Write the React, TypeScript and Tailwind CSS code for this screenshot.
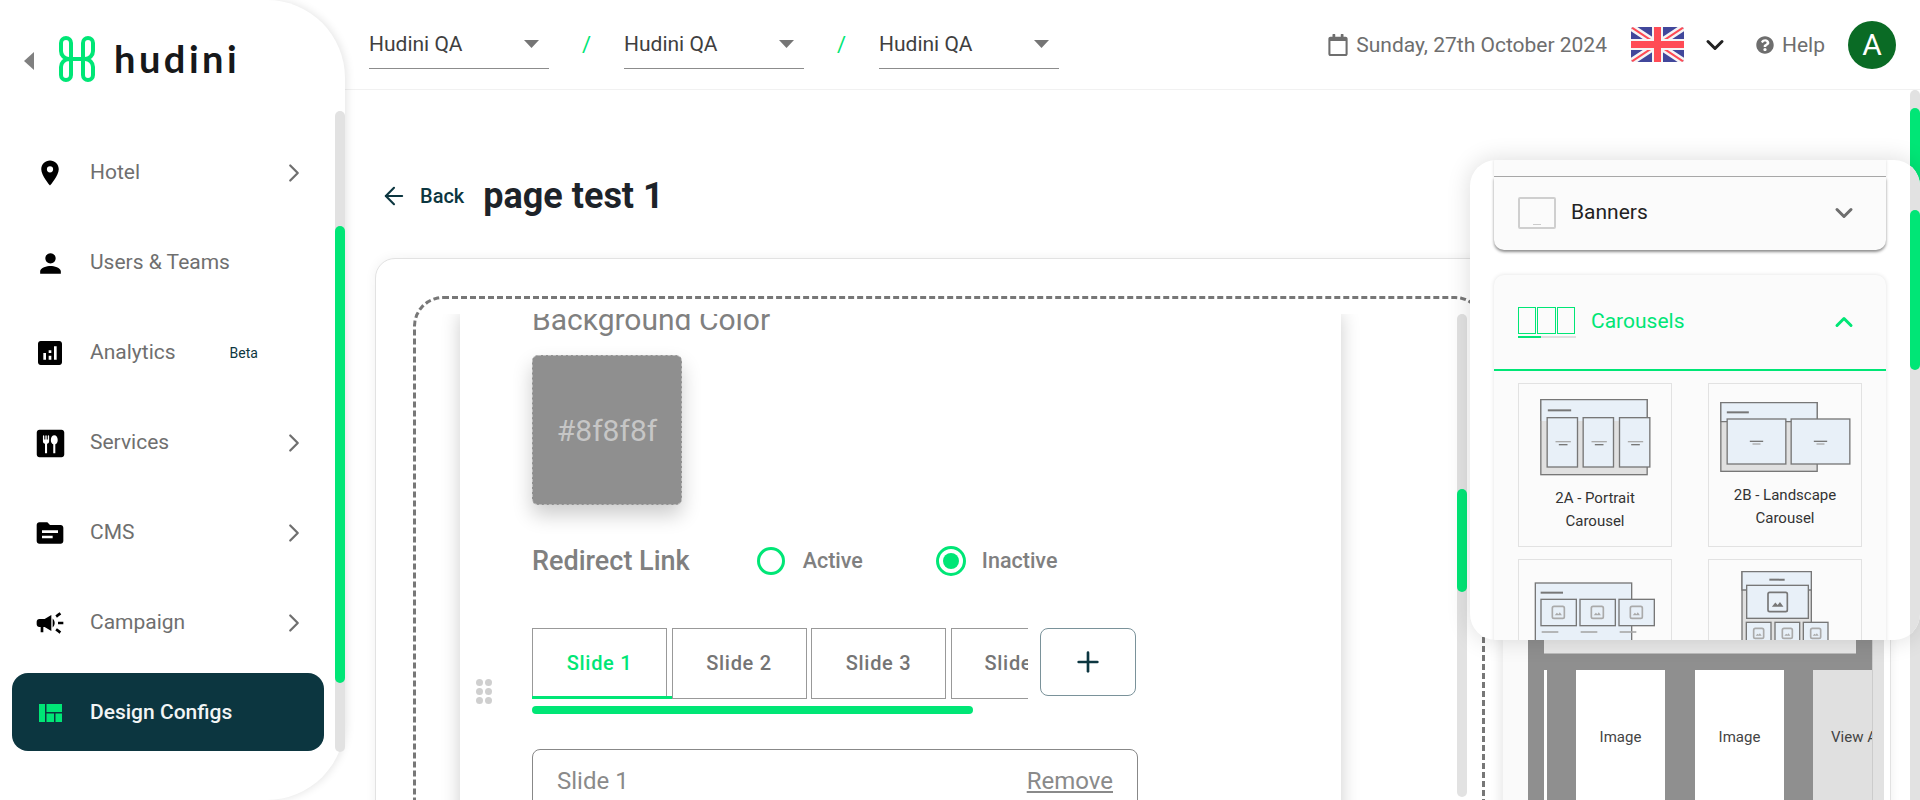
import { ArrowLeft, ChevronDown, ChevronRight, ChevronUp, Plus } from "lucide-react";
import { FaQuestionCircle, FaRegCalendar } from "react-icons/fa";
import {
  MdAnalytics,
  MdCampaign,
  MdDining,
  MdLocationOn,
  MdPerson,
  MdTopic,
} from "react-icons/md";

const navItems = [
  { icon: <MdLocationOn size={30} />, label: "Hotel", arrow: true },
  { icon: <MdPerson size={31} />, label: "Users & Teams" },
  { icon: <MdAnalytics size={32} />, label: "Analytics", beta: true },
  { icon: <MdDining size={33} />, label: "Services", arrow: true },
  { icon: <MdTopic size={32} />, label: "CMS", arrow: true },
  { icon: <MdCampaign size={32} />, label: "Campaign", arrow: true },
];

function Logo() {
  return (
    <svg width="38" height="46" viewBox="0 0 38 46" fill="none" stroke="#00e676" strokeWidth="4">
      <path d="M13 23H11a8 8 0 0 1-8-8V7a5 5 0 0 1 10 0V39a5 5 0 0 1-10 0V31a8 8 0 0 1 8-8" />
      <path d="M25 23h2a8 8 0 0 0 8-8V7a5 5 0 0 0-10 0V39a5 5 0 0 0 10 0V31a8 8 0 0 0-8-8" />
      <path d="M13 23h12" />
    </svg>
  );
}

function Sidebar() {
  return (
    <aside className="w-[345px] h-[800px] shrink-0 bg-white rounded-r-[78px] shadow-[2px_0_8px_rgba(0,0,0,0.1)] z-10 flex flex-col">
      <div className="h-[111px] shrink-0 flex items-start pt-[36px] pl-[24px]">
        <svg width="10" height="18" viewBox="0 0 10 18" className="mt-[16px] mr-[24px]">
          <polygon points="10,0 10,18 0,9" fill="#808080" />
        </svg>
        <Logo />
        <span className="ml-[18px] mt-[-1px] text-[38px] leading-[46px] font-bold tracking-[3.5px] text-[#16181a] font-['Lato',sans-serif]">
          hudini
        </span>
      </div>
      <div className="flex flex-1">
        <nav className="w-[335px] pt-[22px] pl-[12px] flex flex-col gap-[12px]">
          {navItems.map((item) => (
            <div key={item.label} className="w-[312px] h-[78px] shrink-0 flex items-center pt-[2px] pl-[20px] pr-[15px]">
              <span className="w-[36px] flex justify-center text-black">{item.icon}</span>
              <span className="ml-[22px] text-[21px] text-[#6f6f6f]">{item.label}</span>
              {item.beta && <span className="ml-[54px] text-[14px] text-[#0c3640]">Beta</span>}
              {item.arrow && <ChevronRight size={30} strokeWidth={1.8} className="ml-auto text-[#6f6f6f]" />}
            </div>
          ))}
          <div className="w-[312px] h-[78px] shrink-0 flex items-center pt-[2px] pl-[27px] rounded-[16px] bg-[#0c3640]">
            <svg width="23" height="18" viewBox="0 0 23 18" fill="#00e676">
              <rect x="0" y="0" width="6" height="18" />
              <rect x="7.500" y="0" width="15.500" height="8" />
              <rect x="7.500" y="9.500" width="7.500" height="8.500" />
              <rect x="16.500" y="9.500" width="6.500" height="8.500" />
            </svg>
            <span className="ml-[28px] text-[21px] font-medium text-[#f2f5f5]">Design Configs</span>
          </div>
        </nav>
        <div className="w-[10px] h-[641px] rounded-full bg-[#e2e2e2]">
          <div className="mt-[115px] h-[457px] rounded-full bg-[#00e676]" />
        </div>
      </div>
    </aside>
  );
}

function HierarchySelect() {
  return (
    <div className="w-[180px] h-[48px] flex items-center justify-between pr-[10px] border-b-[1.5px] border-[#8c8c8c]">
      <span className="pt-[2px] text-[21px] text-[#3f3f3f]">Hudini QA</span>
      <svg width="15" height="8" viewBox="0 0 15 8">
        <polygon points="0,0 15,0 7.500,8" fill="#757575" />
      </svg>
    </div>
  );
}

function Header() {
  return (
    <header className="h-[90px] shrink-0 flex items-center pl-[24px] pr-[24px] border-b border-[#f1f1f1]">
      <HierarchySelect />
      <span className="w-[75px] text-center text-[22px] text-[#00e676]">/</span>
      <HierarchySelect />
      <span className="w-[75px] text-center text-[22px] text-[#00e676]">/</span>
      <HierarchySelect />
      <div className="ml-auto flex items-center text-[#6e6e6e]">
        <FaRegCalendar size={22} />
        <span className="ml-[7px] pt-[2px] text-[21px]">Sunday, 27th October 2024</span>
        <svg width="53" height="35" viewBox="0 0 53 35" className="ml-[24px] rounded-[3px]">
          <rect width="53" height="35" fill="#41479b" />
          <path d="M0 0 53 35M53 0 0 35" stroke="#f5f5f5" strokeWidth="7" />
          <path d="M0 0 53 35M53 0 0 35" stroke="#ff4b55" strokeWidth="2" />
          <path d="M26.500 0V35M0 17.500H53" stroke="#f5f5f5" strokeWidth="11" />
          <path d="M26.500 0V35M0 17.500H53" stroke="#ff4b55" strokeWidth="7" />
        </svg>
        <ChevronDown size={28} strokeWidth={2.6} className="ml-[17px] text-[#222]" />
        <FaQuestionCircle size={18} className="ml-[27px]" />
        <span className="ml-[8px] pt-[2px] text-[21px]">Help</span>
        <span className="ml-[23px] w-[48px] h-[48px] rounded-full bg-[#0a6b25] flex items-center justify-center text-[30px] text-white">
          A
        </span>
      </div>
    </header>
  );
}

function TabButton({ label, active, className }: { label: string; active?: boolean; className: string }) {
  return (
    <div
      className={`h-[71px] shrink-0 flex items-center pb-[2px] border border-[#999] text-[20px] font-medium tracking-[0.7px] ${className} ${
        active ? "text-[#00e676]" : "text-[#757575]"
      }`}
    >
      {label}
    </div>
  );
}

function Editor() {
  return (
    <div className="w-[881px] h-[520px] bg-white shadow-[0_0_18px_rgba(0,0,0,0.2)] pl-[72px] font-['Roboto',sans-serif]">
      <div className="-mt-[12px] text-[30px] leading-[36px] text-[#808080]">Background Color</div>
      <div className="mt-[17px] w-[150px] h-[150px] rounded-[6px] bg-[#8f8f8f] border border-dashed border-[#bdbdbd] shadow-[0_10px_20px_rgba(0,0,0,0.2)] flex items-center justify-center text-[30px] text-[#c6c6c6]">
        #8f8f8f
      </div>
      <div className="mt-[38px] h-[36px] flex items-center text-[#808080]">
        <span className="text-[27px] font-medium">Redirect Link</span>
        <span className="ml-[67px] w-[28px] h-[28px] rounded-full border-[3px] border-[#00e676]" />
        <span className="ml-[18px] text-[21.5px] font-medium">Active</span>
        <span className="ml-[73px] w-[30px] h-[30px] rounded-full border-[3px] border-[#00e676] flex items-center justify-center">
          <span className="w-[16px] h-[16px] rounded-full bg-[#00e676]" />
        </span>
        <span className="ml-[16px] text-[21.5px] font-medium">Inactive</span>
      </div>
      <div className="mt-[49px] -ml-[56px] flex items-center">
        <div className="w-[16px] h-[25px] grid grid-cols-2 gap-[2px] mt-[40px]">
          {[1, 2, 3, 4, 5, 6].map((d) => (
            <span key={d} className="w-[7px] h-[7px] rounded-full bg-[#cfcfcf]" />
          ))}
        </div>
        <div className="ml-[40px] w-[496px]">
          <div className="relative flex gap-[4.5px] overflow-hidden">
            <TabButton label="Slide 1" active className="w-[135px] justify-center" />
            <TabButton label="Slide 2" className="w-[135px] justify-center" />
            <TabButton label="Slide 3" className="w-[135px] justify-center" />
            <TabButton label="Slide 4" className="w-[135px] pl-[33px]" />
            <span className="absolute left-0 bottom-0 w-[140px] h-[3px] bg-[#00e676]" />
          </div>
          <div className="mt-[7px] w-[441px] h-[8px] rounded-full bg-[#00e676]" />
        </div>
        <div className="ml-[12px] mb-[18px] w-[96px] h-[68px] rounded-[8px] border border-[#7a929a] flex items-center justify-center text-[#0c3640]">
          <Plus size={32} strokeWidth={2} />
        </div>
      </div>
      <div className="mt-[35px] w-[606px] h-[80px] rounded-[8px] border border-[#888] flex items-start justify-between pt-[13px] px-[24px] text-[24px] text-[#8a8a8a]">
        <span>Slide 1</span>
        <span className="underline">Remove</span>
      </div>
    </div>
  );
}

function PreviewStrip() {
  return (
    <div className="w-[381px] shrink-0 h-[520px] flex self-start mt-[-2px]">
      <div className="w-[25px] bg-[#fafafa] shadow-[-4px_0_10px_rgba(0,0,0,0.08)]" />
      <div className="w-[344px] bg-[#8f8f8f] flex flex-col pt-[302px] overflow-hidden">
        <div className="mx-[16px] h-[58px] shrink-0 bg-[#e8e8e8] border-b border-[#bbb]" />
        <div className="mt-[16px] ml-[16px] flex flex-1 text-[15px] text-[#444]">
          <div className="w-[3px] bg-white" />
          <div className="ml-[29px] w-[89px] bg-white flex justify-center pt-[56px]">Image</div>
          <div className="ml-[30px] w-[89px] bg-white flex justify-center pt-[56px]">Image</div>
          <div className="ml-[29px] w-[59px] bg-[#e0e0e0] pl-[18px] pt-[56px] whitespace-nowrap overflow-hidden">View All</div>
        </div>
      </div>
      <div className="w-[12px] bg-[#e2e2e2] border-l border-[#ccc]" />
    </div>
  );
}

function MainCard() {
  return (
    <section className="ml-[30px] mt-[52px] w-[1516px] h-[600px] rounded-t-[20px] border border-[#e2e2e2] shadow-[0_0_12px_rgba(0,0,0,0.06)] pt-[37px] pl-[37px] flex gap-[18px] bg-white">
      <div className="w-[1072px] h-[560px] shrink-0 rounded-[30px] border-[3px] border-dashed border-[#777] pt-[15px]">
        <div className="flex h-[486px] overflow-hidden pl-[44px]">
          <Editor />
          <div className="ml-[116px] w-[10px] h-[483px] rounded-full bg-[#e2e2e2]">
            <div className="mt-[175px] h-[103px] rounded-full bg-[#00e676]" />
          </div>
        </div>
      </div>
      <PreviewStrip />
    </section>
  );
}

function Thumb2A() {
  return (
    <svg width="117" height="80" viewBox="230 80 350 240" fill="#e8f0f8" stroke="#777" strokeWidth="4">
      <rect x="241" y="88" width="319" height="225" fill="#e0e0e0" />
      <path d="M241 152V88H560V152Z" stroke="none" />
      <path d="M241 152V88H560V140" fill="none" />
      <path d="M262 120h70" strokeWidth="6" />
      {[260, 368, 477].map((x) => (
        <g key={x}>
          <rect x={x} y="142" width="91" height="148" />
          <path d={`M${x + 25} 214h46`} stroke="#aaa" strokeWidth="4" />
          <path d={`M${x + 35} 223h26`} strokeWidth="4" />
        </g>
      ))}
    </svg>
  );
}

function Thumb2B() {
  return (
    <svg width="137" height="75" viewBox="770 90 410 225" fill="#e8f0f8" stroke="#777" strokeWidth="4">
      <rect x="781" y="98" width="289" height="206" fill="#e0e0e0" />
      <path d="M781 155V98H1070V155Z" />
      <path d="M799 127h66" strokeWidth="6" />
      {[800, 992].map((x) => (
        <g key={x}>
          <rect x={x} y="147" width="176" height="135" />
          <path d={`M${x + 68} 214h40`} strokeWidth="4" />
          <path d={`M${x + 76} 222h24`} stroke="#aaa" strokeWidth="4" />
        </g>
      ))}
    </svg>
  );
}

function ImageGlyph({ x, y, s, dark }: { x: number; y: number; s: number; dark?: boolean }) {
  const c = dark ? "#777" : "#aaa";
  return (
    <g>
      <rect x={x} y={y} width={s} height={s} rx="5" fill="#e8f0f8" stroke={c} strokeWidth="5" />
      <path d={`M${x + s * 0.2} ${y + s * 0.75}l${s * 0.18} -${s * 0.22}l${s * 0.12} ${s * 0.12}l${s * 0.12} -${s * 0.15}l${s * 0.18} ${s * 0.25}Z`} fill={c} stroke="none" />
    </g>
  );
}

function Thumb3() {
  return (
    <svg width="125" height="60" viewBox="220 635 375 180" fill="#e8f0f8" stroke="#777" strokeWidth="4" className="mt-[21px] ml-[14px]">
      <rect x="227" y="641" width="289" height="200" />
      <path d="M243 670h67" strokeWidth="6" />
      {[244, 361, 478].map((x) => (
        <g key={x}>
          <rect x={x} y="690" width="106" height="79" />
          <ImageGlyph x={x + 34} y={711} s={36} />
          <path d={`M${x + 2} 788h50`} stroke="#aaa" strokeWidth="5" />
        </g>
      ))}
    </svg>
  );
}

function Thumb4() {
  return (
    <svg width="90" height="75" viewBox="845 600 270 225" fill="#e8f0f8" stroke="#777" strokeWidth="4" className="mt-[10px] ml-[32px]">
      <rect x="848" y="605" width="208" height="220" fill="#e0e0e0" />
      <path d="M848 660V605H1056V660Z" />
      <path d="M930 629h46" strokeWidth="6" />
      <rect x="862" y="646" width="185" height="99" />
      <ImageGlyph x={926} y={667} s={58} dark />
      {[861, 947, 1032].map((x) => (
        <g key={x}>
          <rect x={x} y="757" width="74" height="70" />
          <ImageGlyph x={x + 22} y={775} s={30} />
        </g>
      ))}
    </svg>
  );
}

function WidgetPanel() {
  return (
    <div className="absolute left-[1470px] top-[160px] w-[450px] h-[480px] bg-white rounded-[26px] shadow-[0_0_24px_rgba(0,0,0,0.14)] flex overflow-hidden z-20 font-['Roboto',sans-serif]">
      <div className="w-[440px] px-[24px] overflow-hidden">
        <div className="h-[17px] bg-[#fbfbfb] border-b border-[#aaa] shadow-[0_0_3px_rgba(0,0,0,0.15)]" />
        <div className="h-[73px] flex items-center pb-[2px] pl-[24px] pr-[28px] bg-[#fbfbfb] rounded-b-[10px] shadow-[0_2px_3px_rgba(0,0,0,0.45)]">
          <div className="w-[38px] h-[32px] rounded-[2px] border-2 border-[#cfcfcf] flex items-end justify-center">
            <span className="w-[8px] h-[1px] mb-[2px] bg-[#ccc]" />
          </div>
          <span className="ml-[15px] text-[21px] text-[#222]">Banners</span>
          <ChevronDown size={28} strokeWidth={2.6} className="ml-auto text-[#6e6e6e]" />
        </div>
        <div className="mt-[25px] bg-[#fbfbfb] rounded-t-[10px] shadow-[0_0_4px_rgba(0,0,0,0.12)] h-[400px]">
          <div className="h-[96px] flex items-center pl-[24px] pr-[28px] border-b-2 border-[#00e676] text-[#00e676]">
            <div className="w-[58px]">
              <div className="flex gap-[1px]">
                <span className="w-[18px] h-[27px] border border-[#00e676]" />
                <span className="w-[19px] h-[27px] border border-[#00e676]" />
                <span className="w-[18px] h-[27px] border border-[#00e676]" />
              </div>
              <div className="mt-[2px] h-[2px] bg-[#e0e0e0]">
                <div className="w-[23px] h-[2px] bg-[#00e676]" />
              </div>
            </div>
            <span className="ml-[15px] text-[21px]">Carousels</span>
            <ChevronUp size={28} strokeWidth={2.6} className="ml-auto" />
          </div>
          <div className="pt-[12px] pl-[24px] grid grid-cols-[154px_154px] gap-x-[36px] gap-y-[12px] text-[15px] leading-[23px] text-[#333] text-center">
            <div className="h-[164px] border border-[#e2e2e2] flex flex-col items-center pt-[13px]">
              <Thumb2A />
              <div className="mt-[10px]">2A - Portrait<br />Carousel</div>
            </div>
            <div className="h-[164px] border border-[#e2e2e2] flex flex-col items-center pt-[16px]">
              <Thumb2B />
              <div className="mt-[9px]">2B - Landscape<br />Carousel</div>
            </div>
            <div className="h-[164px] border border-[#e2e2e2]"><Thumb3 /></div>
            <div className="h-[164px] border border-[#e2e2e2]"><Thumb4 /></div>
          </div>
        </div>
      </div>
      <div className="w-[10px] rounded-t-full bg-[#e2e2e2]">
        <div className="mt-[50px] h-[160px] rounded-full bg-[#00e676]" />
      </div>
    </div>
  );
}

export default function App() {
  return (
    <div className="relative w-[1920px] h-[800px] overflow-hidden bg-white flex font-['Roboto',sans-serif]">
      <Sidebar />
      <main className="flex-1 min-w-0 flex flex-col">
        <Header />
        <div className="flex flex-1 min-h-0">
          <div className="flex-1 min-w-0">
            <div className="h-[116px] pt-[96px] pl-[35px] flex items-center text-[#0c3640]">
              <ArrowLeft size={28} strokeWidth={1.8} />
              <span className="ml-[12px] text-[20px] font-medium">Back</span>
              <h1 className="ml-[19px] text-[36px] font-bold text-[#1d2329]">page test 1</h1>
            </div>
            <MainCard />
          </div>
          <div className="w-[10px] rounded-t-full bg-[#e2e2e2]">
            <div className="mt-[18px] h-[100px] rounded-full bg-[#00e676]" />
          </div>
        </div>
      </main>
      <WidgetPanel />
    </div>
  );
}
